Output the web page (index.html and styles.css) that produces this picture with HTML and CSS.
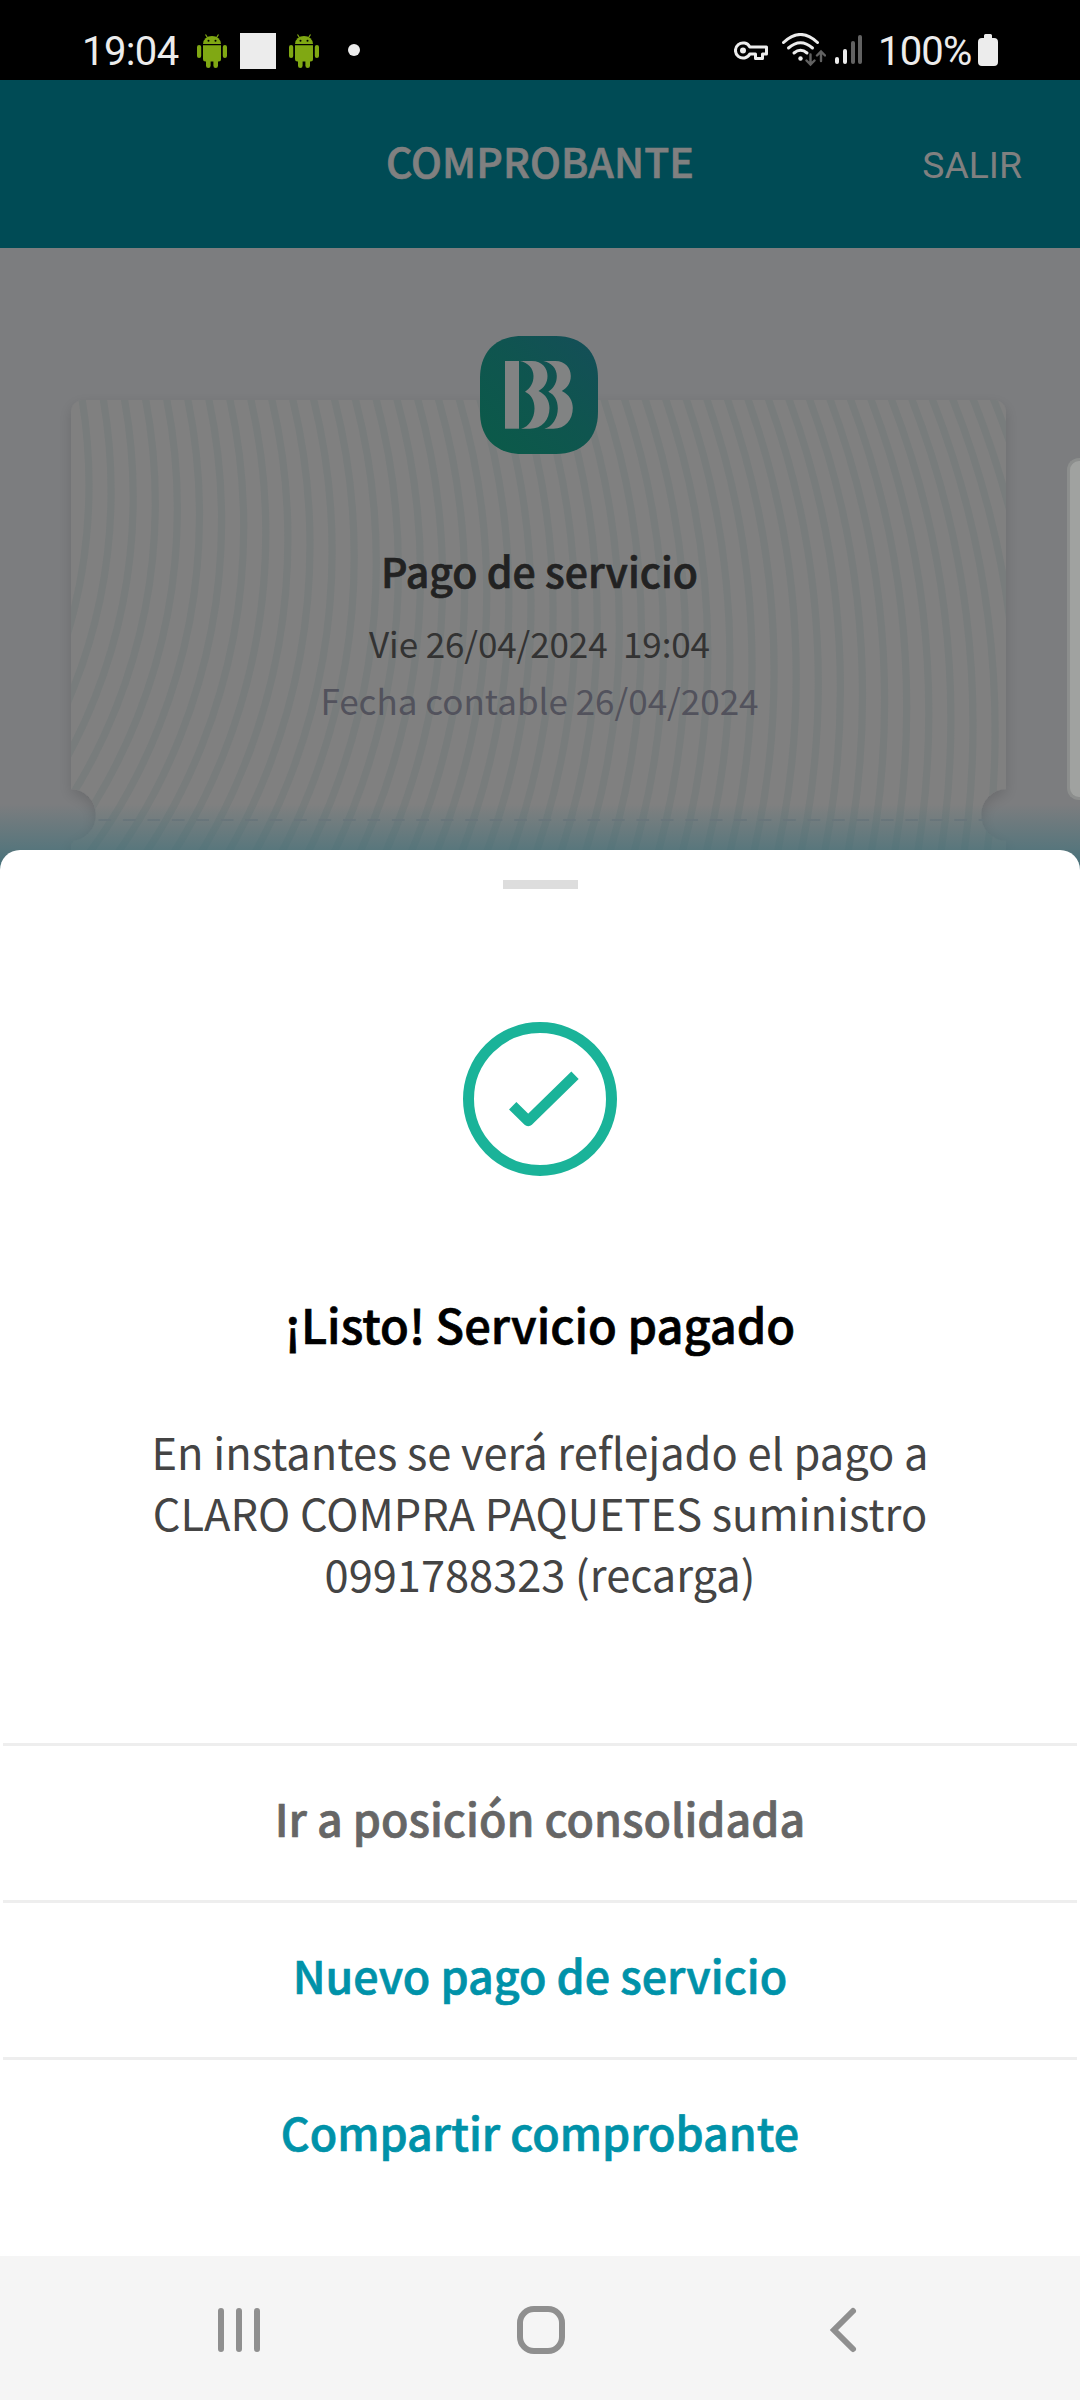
FILE: index.html
```html
<!DOCTYPE html>
<html lang="es">
<head>
<meta charset="utf-8">
<title>Comprobante</title>
<link rel="stylesheet" href="styles.css">
</head>
<body>
<div class="statusbar">
  <div class="status-left">
    <span class="clock">19:04</span>
    <svg class="droid" viewBox="0 0 30 34"><use href="#droid"/></svg>
    <span class="square"></span>
    <svg class="droid" viewBox="0 0 30 34"><use href="#droid"/></svg>
    <span class="dot"></span>
  </div>
  <div class="status-right">
    <svg class="key" width="34" height="20" viewBox="0 0 34 20" fill="none" stroke="#ececec" stroke-width="3"><path d="M15.8 6H32.5V13H28.5V17.5H21.5V13H15.8A7.6 7.6 0 1 1 15.8 6Z" stroke-linejoin="round"/><circle cx="9" cy="9.5" r="3" fill="#ececec" stroke="none"/></svg>
    <svg class="wifi" width="44" height="34" viewBox="0 0 44 34" fill="none" stroke-linecap="round"><g stroke="#ececec" stroke-width="3"><path d="M1.5 9.5Q18.5 -6.5 35.5 9.5"/><path d="M6.5 15Q18.5 4.500 30.500 15"/><path d="M12 20Q18.500 14.500 25 20"/></g><circle cx="18.500" cy="25.500" r="2.200" fill="#ececec"/><g stroke="#626262" stroke-width="2.400"><path d="M28.500 21.500V31M24.500 27.500L28.500 31.500L32.500 27.500M39 28V19M35 22.500L39 18.500L43 22.500"/></g></svg>
    <svg class="signal" width="28" height="32" viewBox="0 0 28 32"><rect x="0" y="23" width="4" height="7" rx="2" fill="#ececec"/><rect x="8" y="15" width="4" height="15" rx="2" fill="#ececec"/><rect x="16" y="7" width="4" height="23" rx="2" fill="#626262"/><rect x="23" y="1" width="4" height="29" rx="2" fill="#626262"/></svg>
    <span class="percent">100%</span>
    <svg class="battery" width="20" height="32" viewBox="0 0 20 32" fill="#ececec"><path d="M6 4V1.500Q6 0 7.500 0H12.500Q14 0 14 1.500V4H16Q20 4 20 8V28Q20 32 16 32H4Q0 32 0 28V8Q0 4 4 4Z"/></svg>
  </div>
</div>

<header class="appbar">
  <h1 class="appbar-title">COMPROBANTE</h1>
  <span class="appbar-exit">SALIR</span>
</header>

<main class="receipt">
  <div class="ticket">
    <div class="ticket-art">
      <svg class="ticket-svg" viewBox="51 380 975 500">
        <defs>
          <clipPath id="ticket-clip"><path id="ticket-shape" d="M71 412A12 12 0 0 1 83 400H994A12 12 0 0 1 1006 412V789A25 26 0 0 0 1006 841V900H71V841A25 26 0 0 0 71 789Z"/></clipPath>
          <filter id="ticket-shadow" x="-5%" y="-10%" width="110%" height="120%"><feDropShadow dx="0" dy="5" stdDeviation="7" flood-color="#000" flood-opacity=".14"/></filter>
        </defs>
        <use href="#ticket-shape" fill="#808080" filter="url(#ticket-shadow)"/>
        <g id="waves" clip-path="url(#ticket-clip)" fill="none" stroke="#787c7c" stroke-width="7.200"></g>
        <path d="M98.500 820H984" stroke="#74777b" stroke-width="2" stroke-dasharray="12.700 11.750"/>
      </svg>
    </div>
    <svg class="logo" viewBox="0 0 118 118">
      <defs>
        <linearGradient id="logo-bg" x1=".1" y1="1" x2="1" y2="0"><stop offset="0" stop-color="#0b5a49"/><stop offset=".5" stop-color="#0f554f"/><stop offset="1" stop-color="#144e58"/></linearGradient>
        <path id="crescent" d="M40 25H52C62 25 67.500 32 67.500 40C67.500 47.500 63.500 52 58.500 55C66 58.500 69.500 65 69.500 72C69.500 84 62 92.700 50 92.700H41C49 91 54.500 82 54.500 72.500C54.500 64 51 58.500 45 55.700C50.500 52 53.500 47 53.500 40C53.500 32.500 48 26.500 40 25Z"/>
      </defs>
      <path d="M0 59V42C0 16 16 0 42 0H76C102 0 118 16 118 42V76C118 102 102 118 76 118H42C16 118 0 102 0 76Z" fill="url(#logo-bg)"/>
      <g fill="#818383"><rect x="25" y="25" width="14" height="67.700"/><use href="#crescent"/><use href="#crescent" x="23.300"/></g>
    </svg>
    <h2 class="ticket-title">Pago de servicio</h2>
    <p class="ticket-date">Vie 26/04/2024&nbsp; 19:04</p>
    <p class="ticket-accounting">Fecha contable 26/04/2024</p>
  </div>
  <div class="fade"></div>
  <div class="edge-handle"></div>
</main>

<section class="sheet">
  <div class="grabber"></div>
  <svg class="check" width="154" height="154" viewBox="0 0 154 154" fill="none" stroke="#1ab399"><circle cx="77" cy="77" r="71.500" stroke-width="11"/><path d="M49.700 83.800L65.200 98.900L112 53.200" stroke-width="10.500" stroke-linejoin="round"/></svg>
  <h2 class="sheet-title">¡Listo! Servicio pagado</h2>
  <p class="sheet-text">En instantes se verá reflejado el pago a<br>CLARO COMPRA PAQUETES suministro<br>0991788323 (recarga)</p>
  <div class="actions">
    <div class="action action-muted">Ir a posición consolidada</div>
    <div class="action">Nuevo pago de servicio</div>
    <div class="action">Compartir comprobante</div>
  </div>
</section>

<nav class="navbar">
  <svg width="48" height="48" viewBox="-3 -1 48 48" stroke="#8f8f8f" stroke-width="6" stroke-linecap="round"><path d="M3 4V42M21 4V42M39 4V42"/></svg>
  <svg width="48" height="48" viewBox="0 0 48 48" fill="none" stroke="#8f8f8f" stroke-width="6"><rect x="3" y="3" width="42" height="42" rx="14"/></svg>
  <svg width="48" height="48" viewBox="-10 -1 48 48" fill="none" stroke="#8f8f8f" stroke-width="6" stroke-linecap="round"><path d="M24 4L5 23L24 42"/></svg>
</nav>

<svg class="symbols" width="0" height="0">
  <symbol id="droid" viewBox="0 0 30 34">
    <g fill="#80a813"><path d="M6 10A9 8 0 0 1 24 10Z"/><path d="M6 11.200H24V25Q24 27.500 21.500 27.500H8.500Q6 27.500 6 25Z"/><rect x="0" y="11" width="4.200" height="13" rx="2.100"/><rect x="25.800" y="11" width="4.200" height="13" rx="2.100"/><rect x="9" y="24" width="4.600" height="10" rx="2.300"/><rect x="16.400" y="24" width="4.600" height="10" rx="2.300"/></g>
    <path d="M8.500 .5L11 4.500M21.500 .5L19 4.500" stroke="#80a813" stroke-width="1.200"/><circle cx="11.500" cy="6.700" r="1" fill="#000"/><circle cx="18.500" cy="6.700" r="1" fill="#000"/>
  </symbol>
</svg>
<script src="waves.js"></script>
</body>
</html>
```
FILE: styles.css
```css
* { box-sizing: border-box; }

body {
  margin: 0;
  width: 1080px;
  height: 2400px;
  display: flex;
  flex-direction: column;
  overflow: hidden;
  background: #fff;
  font-family: "Noto Sans CJK SC", "Noto Sans", sans-serif;
}

h1, h2, p { margin: 0; white-space: nowrap; }
svg { display: block; flex: none; }
.symbols { position: absolute; }

.statusbar {
  flex: none;
  height: 80px;
  padding: 33px 82px 0 82px;
  display: flex;
  justify-content: space-between;
  background: #000;
  color: #ececec;
  font-family: Roboto, sans-serif;
  font-size: 40px;
  line-height: 38px;
}
.status-left, .status-right { display: flex; height: 38px; }
.clock { width: 115px; letter-spacing: -.6px; }
.droid { width: 30px; height: 34px; margin-top: 1px; }
.square { width: 36px; height: 36px; margin: 0 13px; background: #ececec; }
.dot { width: 12px; height: 12px; margin: 11px 0 0 29px; border-radius: 50%; background: #ececec; }
.key { margin: 8px 14px 0 0; }
.wifi { margin-right: 9px; }
.signal { margin: 1px 15px 0 0; }
.percent { width: 100px; letter-spacing: -.8px; }
.battery { margin-top: 1px; }

.appbar {
  flex: none;
  height: 168px;
  padding: 0 58px;
  display: grid;
  grid-template-columns: 1fr auto 1fr;
  align-items: center;
  background: #004b55;
  color: #808080;
}
.appbar-title, .ticket-title, .sheet-title, .action { font-weight: 500; -webkit-text-stroke: .7px currentColor; }
.appbar-title { grid-column: 2; padding-bottom: 8px; font-size: 41px; line-height: 60px; letter-spacing: .1px; }
.appbar-exit { justify-self: end; padding-top: 2px; font: 37.3px/50px Roboto, sans-serif; }

.receipt {
  position: relative;
  flex: none;
  height: 632px;
  padding: 88px 74px 0 71px;
  background: #7c7d7f;
}
.ticket {
  position: relative;
  display: flex;
  flex-direction: column;
  align-items: center;
  text-align: center;
}
.ticket-art { position: absolute; left: -20px; top: 44px; }
.ticket-svg { width: 975px; height: 500px; }
.logo { position: relative; width: 118px; height: 118px; }
.ticket-title, .ticket-date, .ticket-accounting { position: relative; padding-left: 2px; }
.ticket-title { margin-top: 86px; font-size: 41px; line-height: 60px; color: #222; }
.ticket-date { margin-top: 14px; font-size: 35px; line-height: 57px; letter-spacing: -.1px; color: #333; }
.ticket-accounting { font-size: 35px; line-height: 57px; color: #52525c; }

.fade {
  position: absolute;
  left: 0;
  right: 0;
  top: 556px;
  height: 76px;
  background: linear-gradient(rgba(0, 90, 104, 0), rgba(60, 112, 122, .58) 46px, rgba(40, 104, 118, .8));
}
.edge-handle {
  position: absolute;
  right: 0;
  top: 210px;
  width: 13px;
  height: 342px;
  border: 3px solid #8c8e8d;
  border-right: 0;
  border-radius: 12px 0 0 12px;
  background: #a0a2a0;
}

.sheet {
  position: relative;
  flex: none;
  height: 1406px;
  margin-top: -30px;
  padding-top: 30px;
  display: flex;
  flex-direction: column;
  align-items: center;
  border-radius: 20px 20px 0 0;
  background: #fff;
  text-align: center;
}
.grabber { flex: none; width: 75px; height: 9px; background: #ddd; }
.check { margin-top: 133px; }
.sheet-title { margin-top: 113px; font-size: 47px; line-height: 70px; color: #000; }
.sheet-text { margin-top: 62px; font-size: 43.4px; line-height: 61px; color: #444; }
.actions { width: 1074px; margin-top: 139px; }
.action {
  height: 157px;
  padding-top: 1px;
  border-top: 3px solid #eee;
  font-size: 44.8px;
  line-height: 142px;
  color: #0092a9;
}
.action-muted { color: #666; }

.navbar {
  flex: none;
  height: 144px;
  padding: 4px 213px 0 215px;
  display: flex;
  align-items: center;
  justify-content: space-between;
  background: #f5f5f5;
}
```
FILE: waves.js
```js
// Ticket background: arcs whose centre drifts right and down as the radius grows.
const waves = document.getElementById("waves");
for (let k = -2; k < 50; k++) {
  const arc = document.createElementNS("http://www.w3.org/2000/svg", "circle");
  arc.setAttribute("cx", -437 + 12.8 * k);
  arc.setAttribute("cy", 485 + 6 * k);
  arc.setAttribute("r", 526 + 9.3 * k);
  waves.appendChild(arc);
}
```
